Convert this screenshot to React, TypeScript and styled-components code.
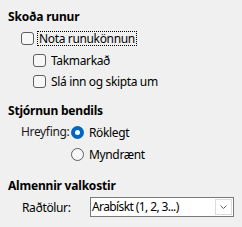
import React, { FC } from "react";
import styled, { createGlobalStyle } from "styled-components";

const Global = createGlobalStyle`
    html, body {
        margin: 0;
        padding: 0;
        background: #f0f0f0;
    }
    body {
        font-family: "Noto Sans", "Open Sans", sans-serif;
        font-size: 12px;
        letter-spacing: -0.35px;
        color: #000;
    }
`

const Page = styled.div`
    width: 242px;
    height: 227px;
    padding-top: 7px;
    box-sizing: border-box;
    background: #f0f0f0;
    overflow: hidden;
`

const Section = styled.div<{ $gap?: number }>`
    margin-top: ${p => p.$gap ?? 0}px;
`

const Title = styled.div`
    font-weight: bold;
    height: 20px;
    line-height: 20px;
    padding-left: 8px;
    letter-spacing: -0.2px;
`

const Row = styled.label<{ $indent: number; $h?: number }>`
    display: flex;
    align-items: center;
    height: ${p => p.$h ?? 22}px;
    padding-left: ${p => p.$indent}px;
    gap: 5px;
    white-space: nowrap;
`

const Box = styled.span`
    width: 11px;
    height: 11px;
    border: 1px solid #5f5f5f;
    border-radius: 3px;
    background: #f7f7f7;
    flex: none;
`

const Caption = styled.span<{ $focus?: boolean }>`
    padding: 0 1px;
    border: 1px dotted ${p => (p.$focus ? "#000" : "transparent")};
    line-height: 13px;
    margin-left: -2px;
`

const Grid = styled.div`
    display: grid;
    grid-template-columns: 50px auto;
    padding-left: 21px;
`

const Label = styled.div<{ $h?: number }>`
    height: ${p => p.$h ?? 22}px;
    line-height: ${p => p.$h ?? 22}px;
    color: #1a1a1a;
`

const Radio = styled.span<{ $on?: boolean }>`
    width: 13px;
    height: 13px;
    border-radius: 50%;
    box-sizing: border-box;
    flex: none;
    border: ${p => (p.$on ? "4px solid #0067c0" : "1px solid #5f5f5f")};
    background: ${p => (p.$on ? "#fff" : "#f7f7f7")};
`

const RadioList = styled.div`
    display: flex;
    flex-direction: column;
`

const SelectRow = styled.div`
    display: flex;
    align-items: center;
    height: 22px;
    padding-left: 22px;
`

const SelectLabel = styled.span`
    width: 68px;
    flex: none;
`

const Select = styled.div`
    display: flex;
    width: 144px;
    height: 20px;
    border: 1px solid #7a7a7a;
    background: #fff;
    box-sizing: border-box;
`

const SelectValue = styled.span`
    flex: 1;
    line-height: 18px;
    padding-left: 1px;
    letter-spacing: -0.6px;
`

const Drop = styled.span`
    width: 15px;
    margin: 1px;
    border: 1px solid #dcdcdc;
    display: flex;
    align-items: center;
    justify-content: center;
`

const App: FC = () => {
    return (
        <>
            <Global />
            <Page>
                <Section>
                    <Title>Skoða runur</Title>
                    <Row $indent={21}>
                        <Box />
                        <Caption $focus>Nota runukönnun</Caption>
                    </Row>
                    <Row $indent={33}>
                        <Box />
                        <Caption>Takmarkað</Caption>
                    </Row>
                    <Row $indent={33} $h={21}>
                        <Box />
                        <Caption>Slá inn og skipta um</Caption>
                    </Row>
                </Section>
                <Section $gap={9}>
                    <Title>Stjórnun bendils</Title>
                    <Grid>
                        <Label>Hreyfing:</Label>
                        <RadioList>
                            <Row $indent={0}>
                                <Radio $on />
                                <Caption>Röklegt</Caption>
                            </Row>
                            <Row $indent={0}>
                                <Radio />
                                <Caption>Myndrænt</Caption>
                            </Row>
                        </RadioList>
                    </Grid>
                </Section>
                <Section $gap={11}>
                    <Title>Almennir valkostir</Title>
                    <SelectRow>
                        <SelectLabel>Raðtölur:</SelectLabel>
                        <Select>
                            <SelectValue>Arabískt (1, 2, 3...)</SelectValue>
                            <Drop>
                                <svg width="7" height="4" viewBox="0 0 7 4">
                                    <path d="M0.5 0.5 L3.5 3.5 L6.5 0.5" fill="none" stroke="#606060" strokeWidth="1" />
                                </svg>
                            </Drop>
                        </Select>
                    </SelectRow>
                </Section>
            </Page>
        </>
    )
}

export default App
